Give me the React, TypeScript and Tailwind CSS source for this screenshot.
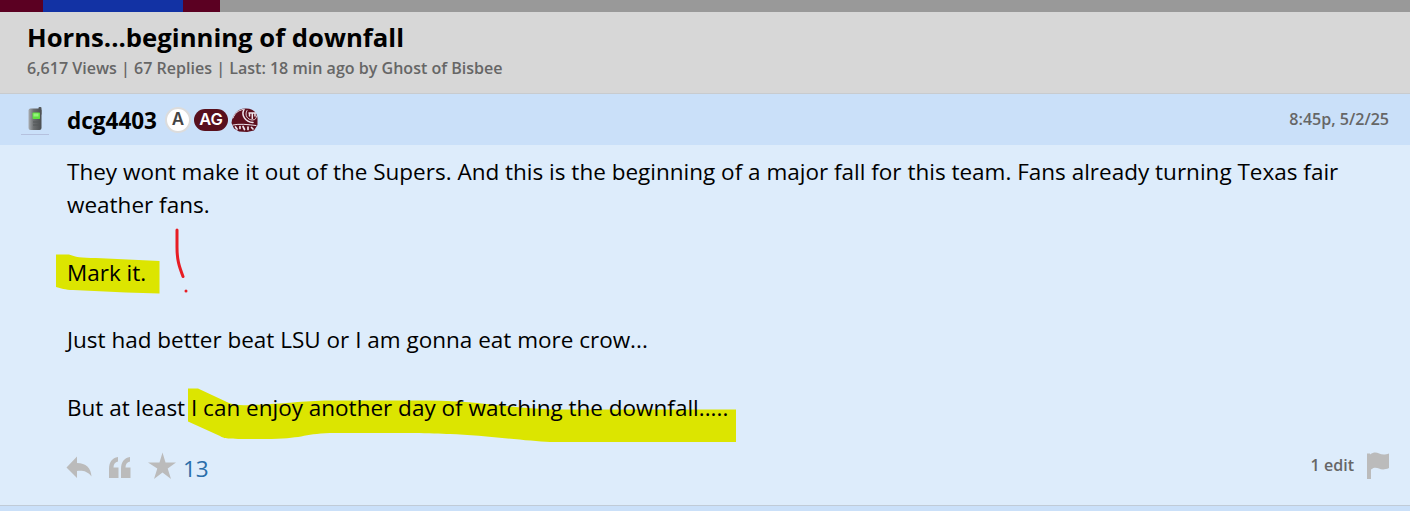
import React from "react";

const PHONE = (
  <svg width="28" height="34" viewBox="0 0 28 34" className="shrink-0">
    <defs>
      <linearGradient id="body" x1="0" x2="1">
        <stop offset="0" stopColor="#a9adb1" />
        <stop offset="0.4" stopColor="#6b6e70" />
        <stop offset="1" stopColor="#4b4e51" />
      </linearGradient>
    </defs>
    <rect x="17.500" y="6" width="3" height="8" rx="1" fill="#55585a" />
    <rect x="7.500" y="7.500" width="13" height="21.500" rx="2" fill="url(#body)" />
    <rect x="11.500" y="11.500" width="7.500" height="6.500" rx="0.8" fill="#5fe03f" />
    <rect x="12.500" y="12.500" width="5" height="3" fill="#95f27c" />
    <path d="M12 21h6.500M12 24h6.500" stroke="#55595b" strokeWidth="1" />
    <path d="M0 33.500h28" stroke="#b5c1de" strokeWidth="1" />
  </svg>
);

function Helmet() {
  return (
    <svg width="27" height="26" viewBox="0 0 27 26" className="shrink-0">
      <path d="M.5 16C1.500 7 7 1.500 14 1.500 21 1 26 5 26.500 11V18L23 23.500 16 25 8 24.500 3 21.500Z" fill="#5c0f1e" />
      <g fill="none" stroke="#efe6ee" strokeLinecap="round">
        <path d="M2 11C4 6 7 3.500 12 2.500" strokeWidth="1" />
        <path d="M13 2.500C10 8 14 15 22 15.500" strokeWidth="1.500" />
        <path d="M16 3.500c-3 5 1 9.500 5.500 9.500 3 0 4-2 4-4" strokeWidth="0.900" />
        <path d="M2 18C8 16.500 17 17.500 25 18.500" strokeWidth="1" />
        <path d="M18 6h6.500M18.500 6.500v2.500M21.300 6.500v5M24 6.500v2.500" strokeWidth="1.500" />
        <path d="M4.500 20 6 22M9 19.500v2M12 19.500l1.500 3M17 20v2.500M20.500 20.500 22 22" strokeWidth="1.700" />
      </g>
    </svg>
  );
}

export default function App() {
  return (
    <div className="relative flex h-[511px] w-[1410px] flex-col overflow-hidden bg-[#ddecfb] font-['Open_Sans','Noto_Sans',sans-serif] text-black">
      <div className="flex h-3 shrink-0 bg-[#999999]">
        <div className="w-[43px] bg-[#5b0022]" />
        <div className="w-[140px] bg-[#1232a4]" />
        <div className="w-[37px] bg-[#5b0022]" />
      </div>
      <header className="h-[82px] shrink-0 border-b border-[#c8cbce] bg-[#d7d7d7] pl-[27px] pt-[8px]">
        <h1 className="text-[25.7px] font-bold leading-[36px]">Horns...beginning of downfall</h1>
        <p className="text-[16.06px] font-semibold leading-[24px] text-[#666]">
          6,617 Views | 67 Replies | Last: 18 min ago by Ghost of Bisbee
        </p>
      </header>
      <div className="flex h-[51px] shrink-0 items-center bg-[#cae0f9] pl-[21px] pr-[21px]">
        <div className="-mt-1">{PHONE}</div>
        <span className="ml-[18px] mt-0.5 text-[22.5px] font-bold">dcg4403</span>
        <span className="ml-[8px] flex size-[26px] items-center justify-center rounded-full border-2 border-[#dcdcdc] bg-white font-['Inter',sans-serif] text-[17px] font-semibold text-[#444]">A</span>
        <span className="ml-[3px] mr-[3px] flex h-[22px] w-[34px] items-center justify-center rounded-full bg-[#58101d] font-['Inter',sans-serif] text-[16.5px] font-semibold text-white">AG</span>
        <Helmet />
        <span className="ml-auto text-[16.06px] font-semibold text-[#666]">8:45p, 5/2/25</span>
      </div>
      <main className="relative isolate h-[290px] shrink-0 pl-[67px] pr-[60px] pt-[9.7px] text-[22.5px] leading-[33.75px]">
        <svg className="absolute left-0 top-0 -z-10" width="1410" height="360" viewBox="0 145 1410 360">
          <path d="M56 254.500H69C75 257 81 258 96 258L159.500 261V293.500L126 292.500L73 290C65 290 61 288 56 287Z" fill="#dce500" />
          <path d="M188 388.500H198L229 403Q237 406 250 405C285 404 300 401 330 400.500H430C480 401 520 409.500 560 409.500H736V442H550C525 441 480 435 450 434C420 432.500 350 433 330 433C302 434 303 439 265 439C226 439 225 439 220 436L188 421.500Z" fill="#dce500" />
          <path d="M177 230V247C177 260 179 266 183 276.500" fill="none" stroke="#e71d24" strokeWidth="3" strokeLinecap="round" />
          <circle cx="186" cy="291" r="1.500" fill="#e71d24" />
        </svg>
        <p>They wont make it out of the Supers. And this is the beginning of a major fall for this team. Fans already turning Texas fair weather fans.</p>
        <p className="mt-[33.75px]">Mark it.</p>
        <p className="mt-[33.75px]">Just had better beat LSU or I am gonna eat more crow...</p>
        <p className="mt-[33.75px]">But at least I can enjoy another day of watching the downfall.....</p>
      </main>
      <footer className="flex h-[70px] shrink-0 items-start pl-[66px] pr-[21px] pt-[17px] text-[#bbb]">
        <svg className="mt-[4px]" width="26" height="24" viewBox="0 0 26 24" fill="currentColor"><path d="M.5 11.500 11 .5V7C20 7 25 12 25.500 20.500 21 15 17 14.500 11 15V22Z" /></svg>
        <svg className="ml-[16px] mt-[4px]" width="24" height="24" viewBox="0 0 24 24" fill="currentColor">
          <path id="quote" d="M10 1V5.500C7 6 5.500 8 5.500 11.500H10.500V22H1V13C1 6 4 2 10 1Z" />
          <use href="#quote" x="12" />
        </svg>
        <svg className="ml-[16px]" width="28" height="28" viewBox="0 0 28 28" fill="currentColor"><path d="M14.500 .5 17.500 10.500H28L19.700 16.500 23 27 14.500 20.500 6 27 9.300 16.500 0 10.500H11.500Z" /></svg>
        <span className="ml-[7px] text-[22.5px] leading-[34px] text-[#2a6eaa]">13</span>
        <span className="ml-auto text-[16.06px] font-semibold leading-[26px] text-[#666]">1 edit</span>
        <svg className="ml-[13px]" width="22" height="28" viewBox="0 0 22 28" fill="currentColor"><path d="M0 1.500H3V2.500C11-3 12 5.500 22 1.500V16C12 20.500 11 12.500 4 17.500V27H0Z" /></svg>
      </footer>
      <div className="h-1.5 shrink-0 border-t border-[#c0cbd7] bg-[#cae0f9]" />
    </div>
  );
}
